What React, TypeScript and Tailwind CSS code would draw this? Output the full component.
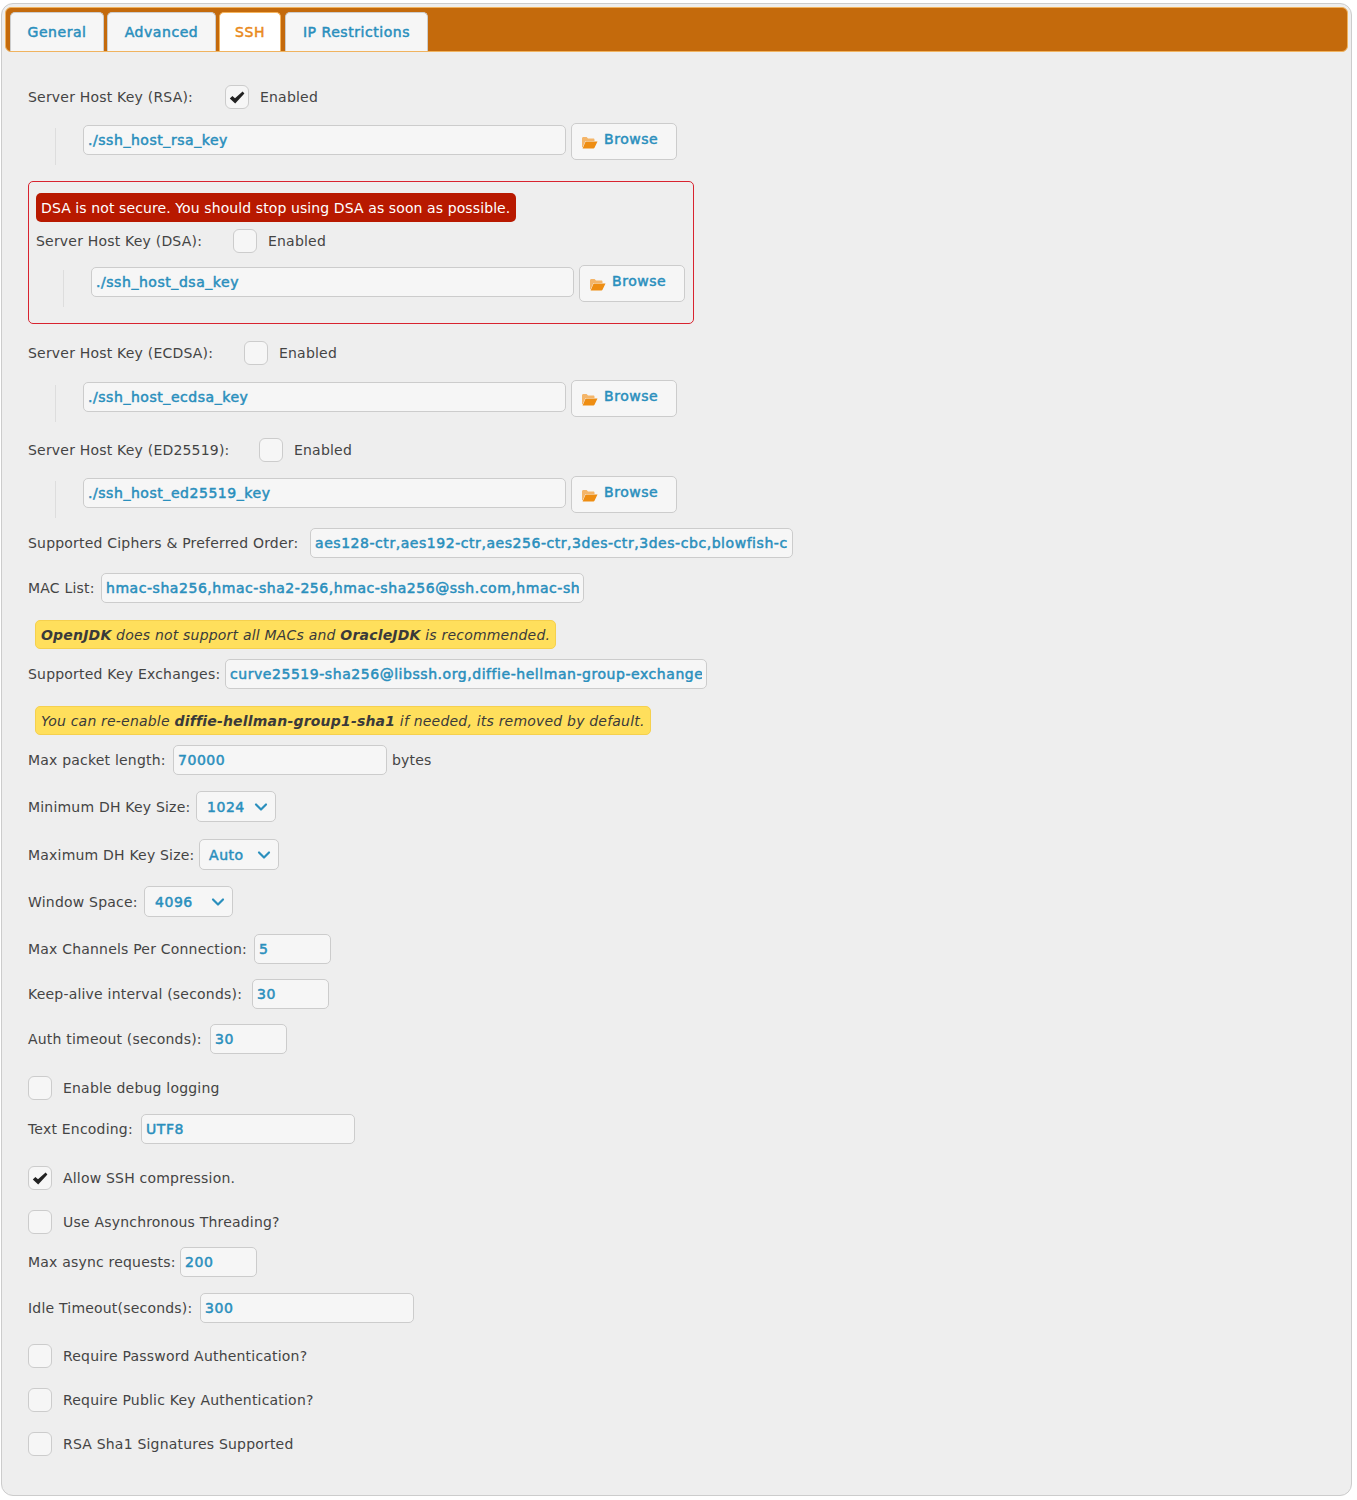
import React from "react";
import { ChevronDown } from "lucide-react";

const Folder = () => (
  <svg width="17" height="14" viewBox="0 0 17 14" className="shrink-0">
    <path d="M1 3.5C1 2.7 1.6 2 2.4 2h3.2l1.4 1.6h5.4c.6 0 1.1.5 1.1 1.1V6H4.4L1.6 12.5 1 12z" fill="#f4b569" />
    <path d="M4.6 6.5H16.5l-3 6.2c-.2.5-.6.8-1.1.8H1.6z" fill="#ee8d12" />
  </svg>
);

const CheckMark = () => (
  <svg width="16" height="13" viewBox="0 0 16 13">
    <path d="M0.8 7.4 3.4 4.9 6 7.3 13.6 0.6 15.4 2.4 6.2 12.6z" fill="#222222" />
  </svg>
);

const Box = ({ checked = false }: { checked?: boolean }) => (
  <span className="flex h-6 w-6 shrink-0 items-center justify-center rounded-md border border-[#cccccc] bg-[#f6f6f6]">
    {checked && <CheckMark />}
  </span>
);

const blue = "font-normal tracking-[0.55px] text-[#2a8fbd] [-webkit-text-stroke:0.5px_#2a8fbd]";

const inputCls = `h-[30px] rounded-[5px] border border-[#cccccc] bg-[#f6f6f6] px-[4px] outline-none ${blue}`;

const Field = ({ w, value }: { w: string; value: string }) => (
  <input readOnly defaultValue={value} className={`${inputCls} ${w}`} />
);

const KeyHead = ({ label, gap, cls }: { label: string; gap: string; cls?: string }) => (
  <div className={`flex h-6 items-center ${cls ?? ""}`}>
    <span className={gap}>{label}</span>
    <Box />
    <span className="ml-[11px]">Enabled</span>
  </div>
);

const KeyPath = ({ value, cls }: { value: string; cls: string }) => (
  <div className={`flex ${cls}`}>
    <div className="mt-[5px] ml-[27px] h-[37px] w-px bg-[#dddddd]" />
    <Field w="ml-[27px] mt-[2px] w-[483px]" value={value} />
    <button className={`ml-[5px] flex h-[37px] w-[106px] items-start rounded-[5px] border border-[#cccccc] bg-[#f6f6f6] pl-[9px] pt-[5px] ${blue}`}>
      <span className="mt-[6px]"><Folder /></span>
      <span className="ml-[6px]">Browse</span>
    </button>
  </div>
);

const LabeledInput = ({ label, lw, w, value, cls, after }: { label: string; lw: string; w: string; value: string; cls: string; after?: string }) => (
  <div className={`flex items-center ${cls}`}>
    <span className={`whitespace-nowrap ${lw}`}>{label}</span>
    <Field w={w} value={value} />
    {after && <span className="ml-[5px]">{after}</span>}
  </div>
);

const LabeledSelect = ({ label, lw, w, value, cls, pad }: { label: string; lw: string; w: string; value: string; cls: string; pad: string }) => (
  <div className={`flex items-center ${cls}`}>
    <span className={`whitespace-nowrap ${lw}`}>{label}</span>
    <div className={`flex h-[31px] items-center justify-between rounded-[5px] border border-[#cccccc] bg-[#f6f6f6] pr-[4px] ${blue} ${w} ${pad}`}>
      <span>{value}</span>
      <ChevronDown size={20} strokeWidth={2.6} />
    </div>
  </div>
);

const Check = ({ label, checked, cls }: { label: string; checked?: boolean; cls: string }) => (
  <div className={`flex h-6 items-center ${cls}`}>
    <Box checked={checked} />
    <span className="ml-[11px]">{label}</span>
  </div>
);

const Note = ({ children, cls }: { children: React.ReactNode; cls: string }) => (
  <div className={`ml-[7px] flex h-[29px] w-fit items-center rounded-[5px] border border-[#f5d04e] bg-[#ffdf5c] px-[5px] italic text-[#3a3a3a] ${cls}`}>
    <span>{children}</span>
  </div>
);

const Tab = ({ label, w, active, cls }: { label: string; w: string; active?: boolean; cls?: string }) => (
  <div
    className={`flex h-[39px] items-center justify-center rounded-t-[5px] border border-b-0 tracking-[0.55px] ${w} ${cls ?? ""} ${
      active
        ? "border-[#f5b45c] bg-white text-[#e98a1c] [-webkit-text-stroke:0.5px_#e98a1c]"
        : "border-[#cccccc] bg-[#f6f6f6] text-[#2a8fbd] [-webkit-text-stroke:0.5px_#2a8fbd]"
    }`}
  >
    {label}
  </div>
);

export default function App() {
  return (
    <div className="h-[1500px] bg-white pt-[3px] pl-px font-['DejaVu_Sans',sans-serif] text-[14px] leading-[20px] tracking-[0.2px] text-[#444444]">
      <div className="h-[1493px] w-[1351px] rounded-xl border border-[#cccccc] bg-[#eeeeee] p-[3px]">
        <div className="flex h-[45px] items-end rounded-[6px] border border-[#f0b35f] bg-[#c46a0c] pl-[4px]">
          <Tab label="General" w="w-[94px]" />
          <Tab label="Advanced" w="w-[109px]" cls="ml-[3px]" />
          <Tab label="SSH" w="w-[62px]" cls="ml-[3px]" active />
          <Tab label="IP Restrictions" w="w-[143px]" cls="ml-[4px]" />
        </div>
        <div className="pl-[23px]">
          <div className="mt-[33px] flex h-6 items-center">
            <span className="w-[197px]">Server Host Key (RSA):</span>
            <Box checked />
            <span className="ml-[11px]">Enabled</span>
          </div>
          <KeyPath value="./ssh_host_rsa_key" cls="mt-[14px]" />
          <div className="mt-[16px] h-[143px] w-[666px] rounded-[5px] border border-[#d8232f] px-[7px] pt-[11px]">
            <div className="flex h-[29px] w-[480px] items-center whitespace-nowrap rounded-[5px] bg-[#b81900] px-[5px] tracking-[0.1px] text-white">
              DSA is not secure. You should stop using DSA as soon as possible.
            </div>
            <KeyHead label="Server Host Key (DSA):" gap="w-[197px]" cls="mt-[7px]" />
            <KeyPath value="./ssh_host_dsa_key" cls="mt-[12px]" />
          </div>
          <KeyHead label="Server Host Key (ECDSA):" gap="w-[216px]" cls="mt-[17px]" />
          <KeyPath value="./ssh_host_ecdsa_key" cls="mt-[15px]" />
          <KeyHead label="Server Host Key (ED25519):" gap="w-[231px]" cls="mt-[16px]" />
          <KeyPath value="./ssh_host_ed25519_key" cls="mt-[14px]" />
          <LabeledInput cls="mt-[10px]" lw="w-[282px]" label="Supported Ciphers & Preferred Order:" w="w-[483px]" value="aes128-ctr,aes192-ctr,aes256-ctr,3des-ctr,3des-cbc,blowfish-cbc,arcfour,arcfour128,arcfour256" />
          <LabeledInput cls="mt-[15px]" lw="w-[73px]" label="MAC List:" w="w-[483px]" value="hmac-sha256,hmac-sha2-256,hmac-sha256@ssh.com,hmac-sha2-512,hmac-sha1" />
          <Note cls="mt-[17px]"><b>OpenJDK</b> does not support all MACs and <b>OracleJDK</b> is recommended.</Note>
          <LabeledInput cls="mt-[10px]" lw="w-[197px]" label="Supported Key Exchanges:" w="w-[482px]" value="curve25519-sha256@libssh.org,diffie-hellman-group-exchange-sha256" />
          <Note cls="mt-[17px]">You can re-enable <b>diffie-hellman-group1-sha1</b> if needed, its removed by default.</Note>
          <LabeledInput cls="mt-[10px]" lw="w-[145px]" label="Max packet length:" w="w-[214px]" value="70000" after="bytes" />
          <LabeledSelect cls="mt-[16px]" lw="w-[168px]" label="Minimum DH Key Size:" w="w-[80px]" pad="pl-[10px]" value="1024" />
          <LabeledSelect cls="mt-[17px]" lw="w-[171px]" label="Maximum DH Key Size:" w="w-[80px]" pad="pl-[9px]" value="Auto" />
          <LabeledSelect cls="mt-[16px]" lw="w-[116px]" label="Window Space:" w="w-[89px]" pad="pl-[10px]" value="4096" />
          <LabeledInput cls="mt-[17px]" lw="w-[226px]" label="Max Channels Per Connection:" w="w-[77px]" value="5" />
          <LabeledInput cls="mt-[15px]" lw="w-[224px]" label="Keep-alive interval (seconds):" w="w-[77px]" value="30" />
          <LabeledInput cls="mt-[15px]" lw="w-[182px]" label="Auth timeout (seconds):" w="w-[77px]" value="30" />
          <Check cls="mt-[22px]" label="Enable debug logging" />
          <LabeledInput cls="mt-[14px]" lw="w-[113px]" label="Text Encoding:" w="w-[214px]" value="UTF8" />
          <Check cls="mt-[22px]" label="Allow SSH compression." checked />
          <Check cls="mt-[20px]" label="Use Asynchronous Threading?" />
          <LabeledInput cls="mt-[13px]" lw="w-[152px]" label="Max async requests:" w="w-[77px]" value="200" />
          <LabeledInput cls="mt-[16px]" lw="w-[172px]" label="Idle Timeout(seconds):" w="w-[214px]" value="300" />
          <Check cls="mt-[21px]" label="Require Password Authentication?" />
          <Check cls="mt-[20px]" label="Require Public Key Authentication?" />
          <Check cls="mt-[20px]" label="RSA Sha1 Signatures Supported" />
        </div>
      </div>
    </div>
  );
}
